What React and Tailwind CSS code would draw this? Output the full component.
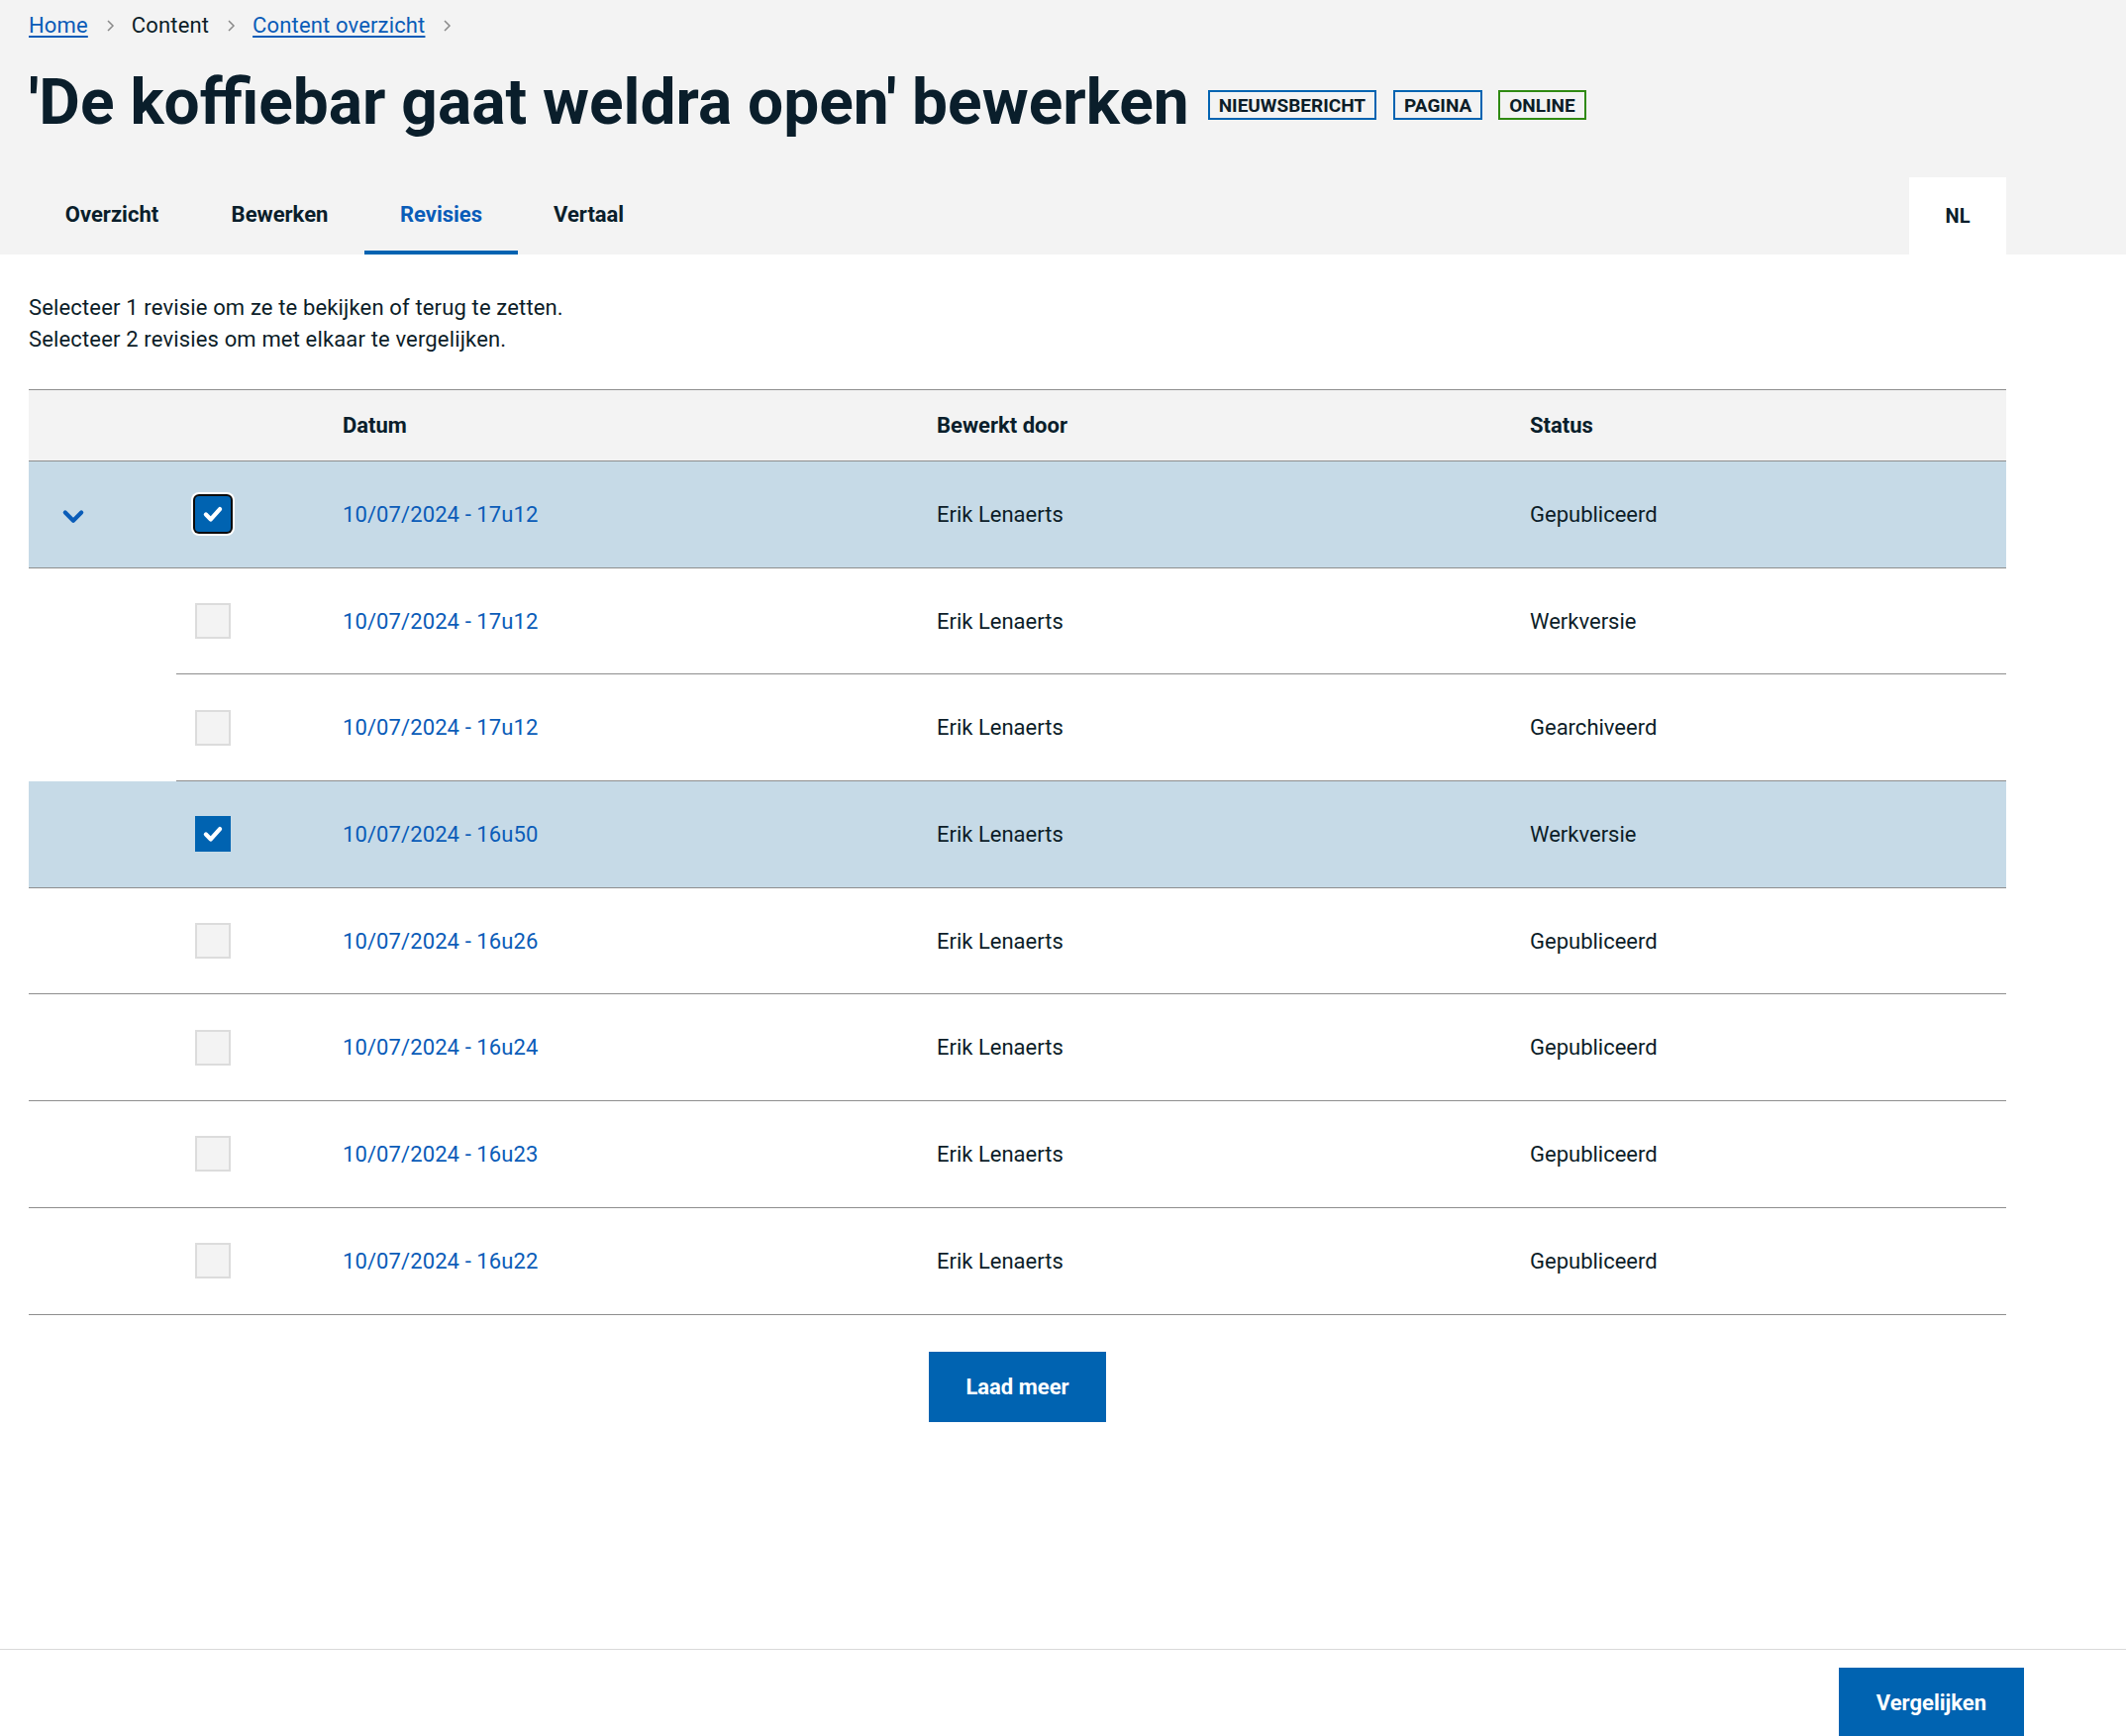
import React from 'react';

const rows = [
  { date: '10/07/2024 - 17u12', status: 'Gepubliceerd', checked: true, focus: true, parent: true, selected: true },
  { date: '10/07/2024 - 17u12', status: 'Werkversie', child: true },
  { date: '10/07/2024 - 17u12', status: 'Gearchiveerd', child: true },
  { date: '10/07/2024 - 16u50', status: 'Werkversie', checked: true, selected: true },
  { date: '10/07/2024 - 16u26', status: 'Gepubliceerd' },
  { date: '10/07/2024 - 16u24', status: 'Gepubliceerd' },
  { date: '10/07/2024 - 16u23', status: 'Gepubliceerd' },
  { date: '10/07/2024 - 16u22', status: 'Gepubliceerd' },
];

const tabs = [
  { label: 'Overzicht', cls: 'w-[168px] justify-center' },
  { label: 'Bewerken', cls: 'w-[171px] justify-center' },
  { label: 'Revisies', cls: 'w-[155px] justify-center', active: true },
  { label: 'Vertaal', cls: 'px-[36px]' },
];

const Crumb = () => (
  <svg width="12" height="14" viewBox="0 0 12 14" fill="none" stroke="#8a8a8a" strokeWidth="1.5">
    <polyline points="4 2 9 7 4 12" />
  </svg>
);

const Checkbox = ({ checked, focus }) => {
  if (!checked) {
    return <div className="w-[36px] h-[36px] bg-[#f3f3f3] border-2 border-[#dcdcdc]" />;
  }
  return (
    <div
      className={`w-[36px] h-[36px] bg-[#0063b1] flex items-center justify-center ${focus ? 'rounded-[4px] shadow-[0_0_0_2px_#0b0b0b,0_0_0_4px_#ffffff]' : ''}`}
    >
      <svg width="26" height="26" viewBox="0 0 24 24" fill="none" stroke="#fff" strokeWidth="4" strokeLinecap="round" strokeLinejoin="round">
        <polyline points="5.5 12.5 10 17 18.5 7.5" />
      </svg>
    </div>
  );
};

const Cells = ({ row }) => (
  <>
    <div className="w-[168px] pl-[19px] flex items-center">
      <Checkbox checked={row.checked} focus={row.focus} />
    </div>
    <div className="w-[600px]">
      <a href="#" className="text-[#0a5cb8] tracking-[0.1px]">{row.date}</a>
    </div>
    <div className="w-[599px]">Erik Lenaerts</div>
    <div className="flex-1">{row.status}</div>
  </>
);

export default function App() {
  return (
    <div className="min-h-screen flex flex-col bg-white font-[Roboto,sans-serif] text-[22px] text-[#0c1d28]">
      {/* Header */}
      <div className="bg-[#f3f3f3] px-[29px]">
        <div className="w-[1997px]">
          <nav className="mt-[10px] h-[32px] flex items-center gap-[16px] leading-[32px] tracking-[0.15px]">
            <a href="#" className="text-[#0a5cb8] underline underline-offset-[3px]">Home</a>
            <Crumb />
            <span>Content</span>
            <Crumb />
            <a href="#" className="text-[#0a5cb8] underline underline-offset-[3px]">Content overzicht</a>
            <Crumb />
          </nav>

          <div className="mt-[26px] h-[72px] flex items-center">
            <h1 className="text-[64px] font-bold leading-[72px] text-[#0a1e2b]">
              'De koffiebar gaat weldra open' bewerken
            </h1>
            <span className="ml-[19px] mt-[4px] h-[30px] px-[9px] flex items-center border-2 border-[#0063b1] text-[19px] font-bold uppercase leading-none">Nieuwsbericht</span>
            <span className="ml-[17px] mt-[4px] h-[30px] px-[9px] flex items-center border-2 border-[#0063b1] text-[19px] font-bold uppercase leading-none">Pagina</span>
            <span className="ml-[16px] mt-[4px] h-[30px] px-[9px] flex items-center border-2 border-[#2f8a12] text-[19px] font-bold uppercase leading-none">Online</span>
          </div>

          <div className="mt-[39px] h-[78px] flex items-end justify-between">
            <div className="flex h-[78px]">
              {tabs.map((tab) => (
                <a
                  key={tab.label}
                  href="#"
                  className={`${tab.cls} flex items-center font-bold border-b-4 ${tab.active ? 'text-[#0a5cb8] border-[#0063b1]' : 'text-[#0a1e2b] border-transparent'}`}
                >
                  {tab.label}
                </a>
              ))}
            </div>
            <div className="w-[98px] h-[78px] bg-white flex items-center justify-center text-[20px] font-bold text-[#0a1e2b]">NL</div>
          </div>
        </div>
      </div>

      {/* Content */}
      <main className="flex-1 px-[29px] pt-[38px]">
        <div className="w-[1997px]">
          <p className="leading-[32px] tracking-[0.15px]">
            Selecteer 1 revisie om ze te bekijken of terug te zetten.
            <br />
            Selecteer 2 revisies om met elkaar te vergelijken.
          </p>

          <div className="mt-[34px]">
            {/* table head */}
            <div className="h-[73px] flex items-center bg-[#f3f3f3] border-y border-[#8e8e8e] font-bold text-[#0a1e2b]">
              <div className="w-[149px]" />
              <div className="w-[168px]" />
              <div className="w-[600px]">Datum</div>
              <div className="w-[599px]">Bewerkt door</div>
              <div className="flex-1">Status</div>
            </div>

            {rows.map((row, i) =>
              row.child ? (
                <div key={i} className="h-[107.7px] flex">
                  <div className="w-[149px]" />
                  <div className="flex-1 flex items-center border-b border-[#8e8e8e]">
                    <Cells row={row} />
                  </div>
                </div>
              ) : (
                <div key={i} className={`h-[107.7px] flex items-center border-b border-[#8e8e8e] ${row.selected ? 'bg-[#c6dae7]' : ''}`}>
                  <div className="w-[149px] pl-[31px] pt-[3px] flex items-center">
                    {row.parent && (
                      <svg width="28" height="28" viewBox="0 0 24 24" fill="none" stroke="#0a5cb8" strokeWidth="3.6" strokeLinecap="round" strokeLinejoin="round">
                        <polyline points="5 9 12 16 19 9" />
                      </svg>
                    )}
                  </div>
                  <Cells row={row} />
                </div>
              )
            )}
          </div>

          <div className="mt-[37px] flex justify-center">
            <button className="h-[71px] px-[37px] bg-[#0063b1] text-white font-bold">Laad meer</button>
          </div>
        </div>
      </main>

      {/* Footer */}
      <footer className="h-[88px] border-t border-[#d9d9d9] flex justify-end pr-[103px] pt-[18px] overflow-hidden">
        <button className="h-[71px] px-[38px] bg-[#0063b1] text-white font-bold shrink-0">Vergelijken</button>
      </footer>
    </div>
  );
}
